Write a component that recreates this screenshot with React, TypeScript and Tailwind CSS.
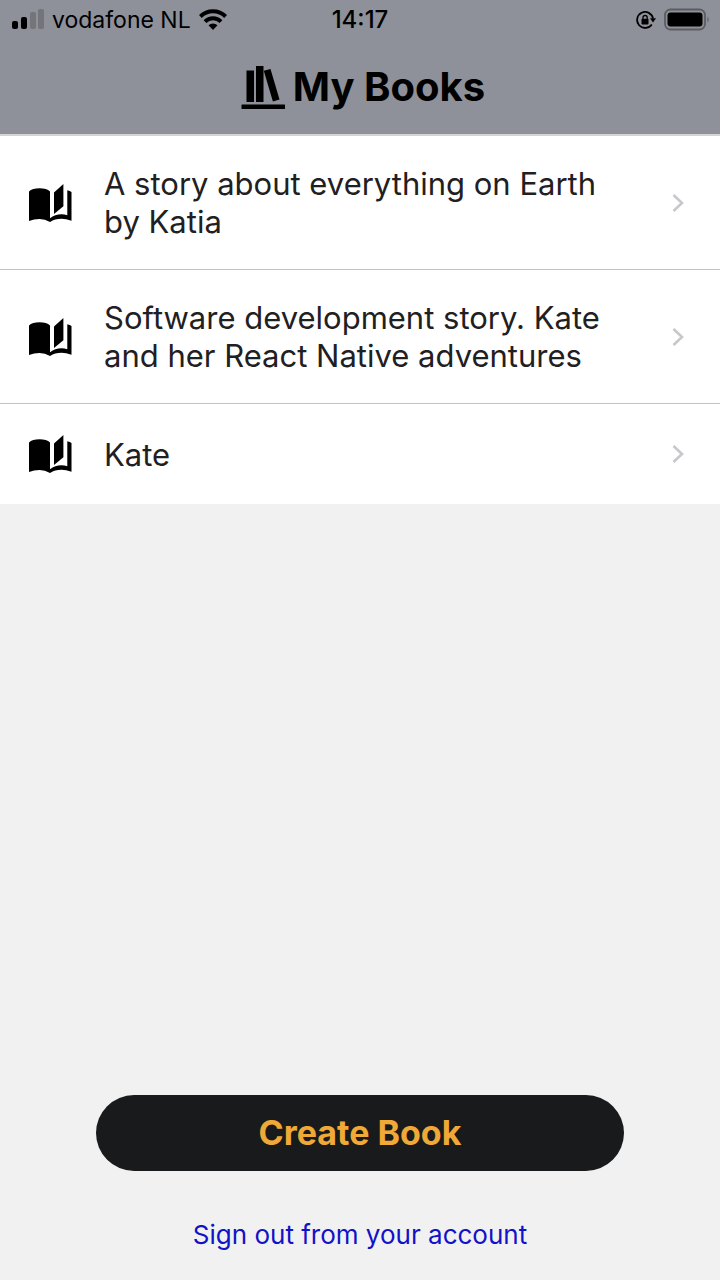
const books = [
  'A story about everything on Earth by Katia',
  'Software development story. Kate and her React Native adventures',
  'Kate',
];

function SignalIcon() {
  return (
    <svg className="h-6 w-8" viewBox="0 0 32 24" aria-hidden="true">
      <rect x="0" y="13" width="6" height="8" rx="2" fill="#000" />
      <rect x="9" y="9" width="6" height="12" rx="2" fill="#000" />
      <rect x="18" y="4" width="6" height="17" rx="2" fill="#73757b" />
      <rect x="26" y="1" width="6" height="20" rx="2" fill="#73757b" />
    </svg>
  );
}

function WifiIcon() {
  return (
    <svg className="h-6 w-7" viewBox="0 0 28 24" aria-hidden="true">
      <g fill="none" stroke="#000" strokeWidth="4">
        <path d="M1.4 8.5a18 18 0 0 1 25.2 0" />
        <path d="M6 13.6a11.5 11.5 0 0 1 16 0" />
      </g>
      <path d="M14 22l-4.5-4.7a6.5 6.5 0 0 1 9 0z" />
    </svg>
  );
}

function RotationLockIcon() {
  return (
    <svg className="h-5 w-5" viewBox="0 0 20 20" aria-hidden="true">
      <path d="M15.8 14.4A8 8 0 1 1 17 8.5" fill="none" stroke="#000" strokeWidth="1.8" />
      <path d="M14 8.2h6l-3 4.4z" />
      <rect x="5.5" y="8.8" width="7" height="5.8" rx=".8" />
      <path d="M7 9.5V7.6a2.1 2.1 0 0 1 4.2 0v1.9" fill="none" stroke="#000" strokeWidth="1.3" />
    </svg>
  );
}

function BatteryIcon() {
  return (
    <svg className="h-6 w-11 overflow-visible" viewBox="0 0 44 24" aria-hidden="true">
      <rect x="1" y="1.5" width="40" height="20" rx="5.5" fill="none" stroke="#5b5d62" strokeWidth="1.8" />
      <rect x="3.5" y="4.5" width="35" height="14" rx="3" />
      <path d="M43.5 8.500q2.500 3 0 6z" fill="#5b5d62" />
    </svg>
  );
}

function ShelfIcon() {
  return (
    <svg className="h-11 w-11" viewBox="0 0 44 44" aria-hidden="true">
      <rect x="5.5" y="5.5" width="7.5" height="31.5" />
      <rect x="15" y="1" width="7.5" height="36" />
      <path d="M22.8 5.8l6.700-1.900 9 30.600-6.600 2z" />
      <rect x="0.5" y="39.5" width="43.5" height="4.5" rx=".5" />
    </svg>
  );
}

function BookIcon() {
  return (
    <svg className="h-10 w-11 shrink-0" viewBox="0 0 44 40" aria-hidden="true">
      <path d="M1 8.500C3 6.200 7 5.300 11.500 5.300S20 6.200 22 8.500V35.200Q27 31.300 33.500 31.300 36.500 31.300 39.300 32.200V7.200Q42 7.800 43.500 9V37.800Q38 35.800 33.500 35.800 27 35.800 22 39 17 36 11.500 36 6 36 1 38z" />
      <path d="M26 9.500l9.400-8.500v22.300L26 31z" />
    </svg>
  );
}

function ChevronIcon() {
  return (
    <svg className="h-6 w-4 shrink-0" viewBox="0 0 16 24" aria-hidden="true">
      <path d="M1.500 4l8.500 8-8.500 8" fill="none" stroke="#c7c7cc" strokeWidth="2.6" />
    </svg>
  );
}

export default function App() {
  return (
    <div className="flex min-h-screen flex-col bg-[#f1f1f1] font-['Inter',sans-serif]">
      <header className="border-b-2 border-[#d3d3d8] bg-[#8e9199] text-black">
        <div className="grid h-10 grid-cols-[1fr_auto_1fr] items-center px-3 text-[23px] leading-6">
          <div className="flex items-center gap-2">
            <SignalIcon />
            <span>vodafone NL</span>
            <WifiIcon />
          </div>
          <time className="text-2xl leading-6 font-medium">14:17</time>
          <div className="flex items-center justify-end gap-2">
            <RotationLockIcon />
            <BatteryIcon />
          </div>
        </div>
        <div className="flex h-[94px] items-center justify-center gap-2 pl-1.5">
          <ShelfIcon />
          <h1 className="text-[40px] leading-12 font-bold">My Books</h1>
        </div>
      </header>

      <main className="flex flex-1 flex-col">
        <ul className="bg-white">
          {books.map((title) => (
            <li key={title} className="border-b border-[#c2c2c5] last:border-b-0">
              <button
                type="button"
                className="flex min-h-[100px] w-full items-center py-7 pr-8 pl-7 text-left"
              >
                <BookIcon />
                <span className="mr-12 ml-8 flex-1 pt-px text-[31px] leading-[38px] text-[#1f2022]">{title}</span>
                <ChevronIcon />
              </button>
            </li>
          ))}
        </ul>

        <div className="mt-auto flex flex-col items-center px-24 pb-[29px]">
          <button
            type="button"
            className="h-[76px] w-full rounded-full bg-[#191a1b] text-[34px] leading-10 font-bold text-[#f0a836]"
          >
            Create Book
          </button>
          <a href="#sign-out" className="mt-12 text-[26px] leading-8 text-[#1212c8]">
            Sign out from your account
          </a>
        </div>
      </main>
    </div>
  );
}
